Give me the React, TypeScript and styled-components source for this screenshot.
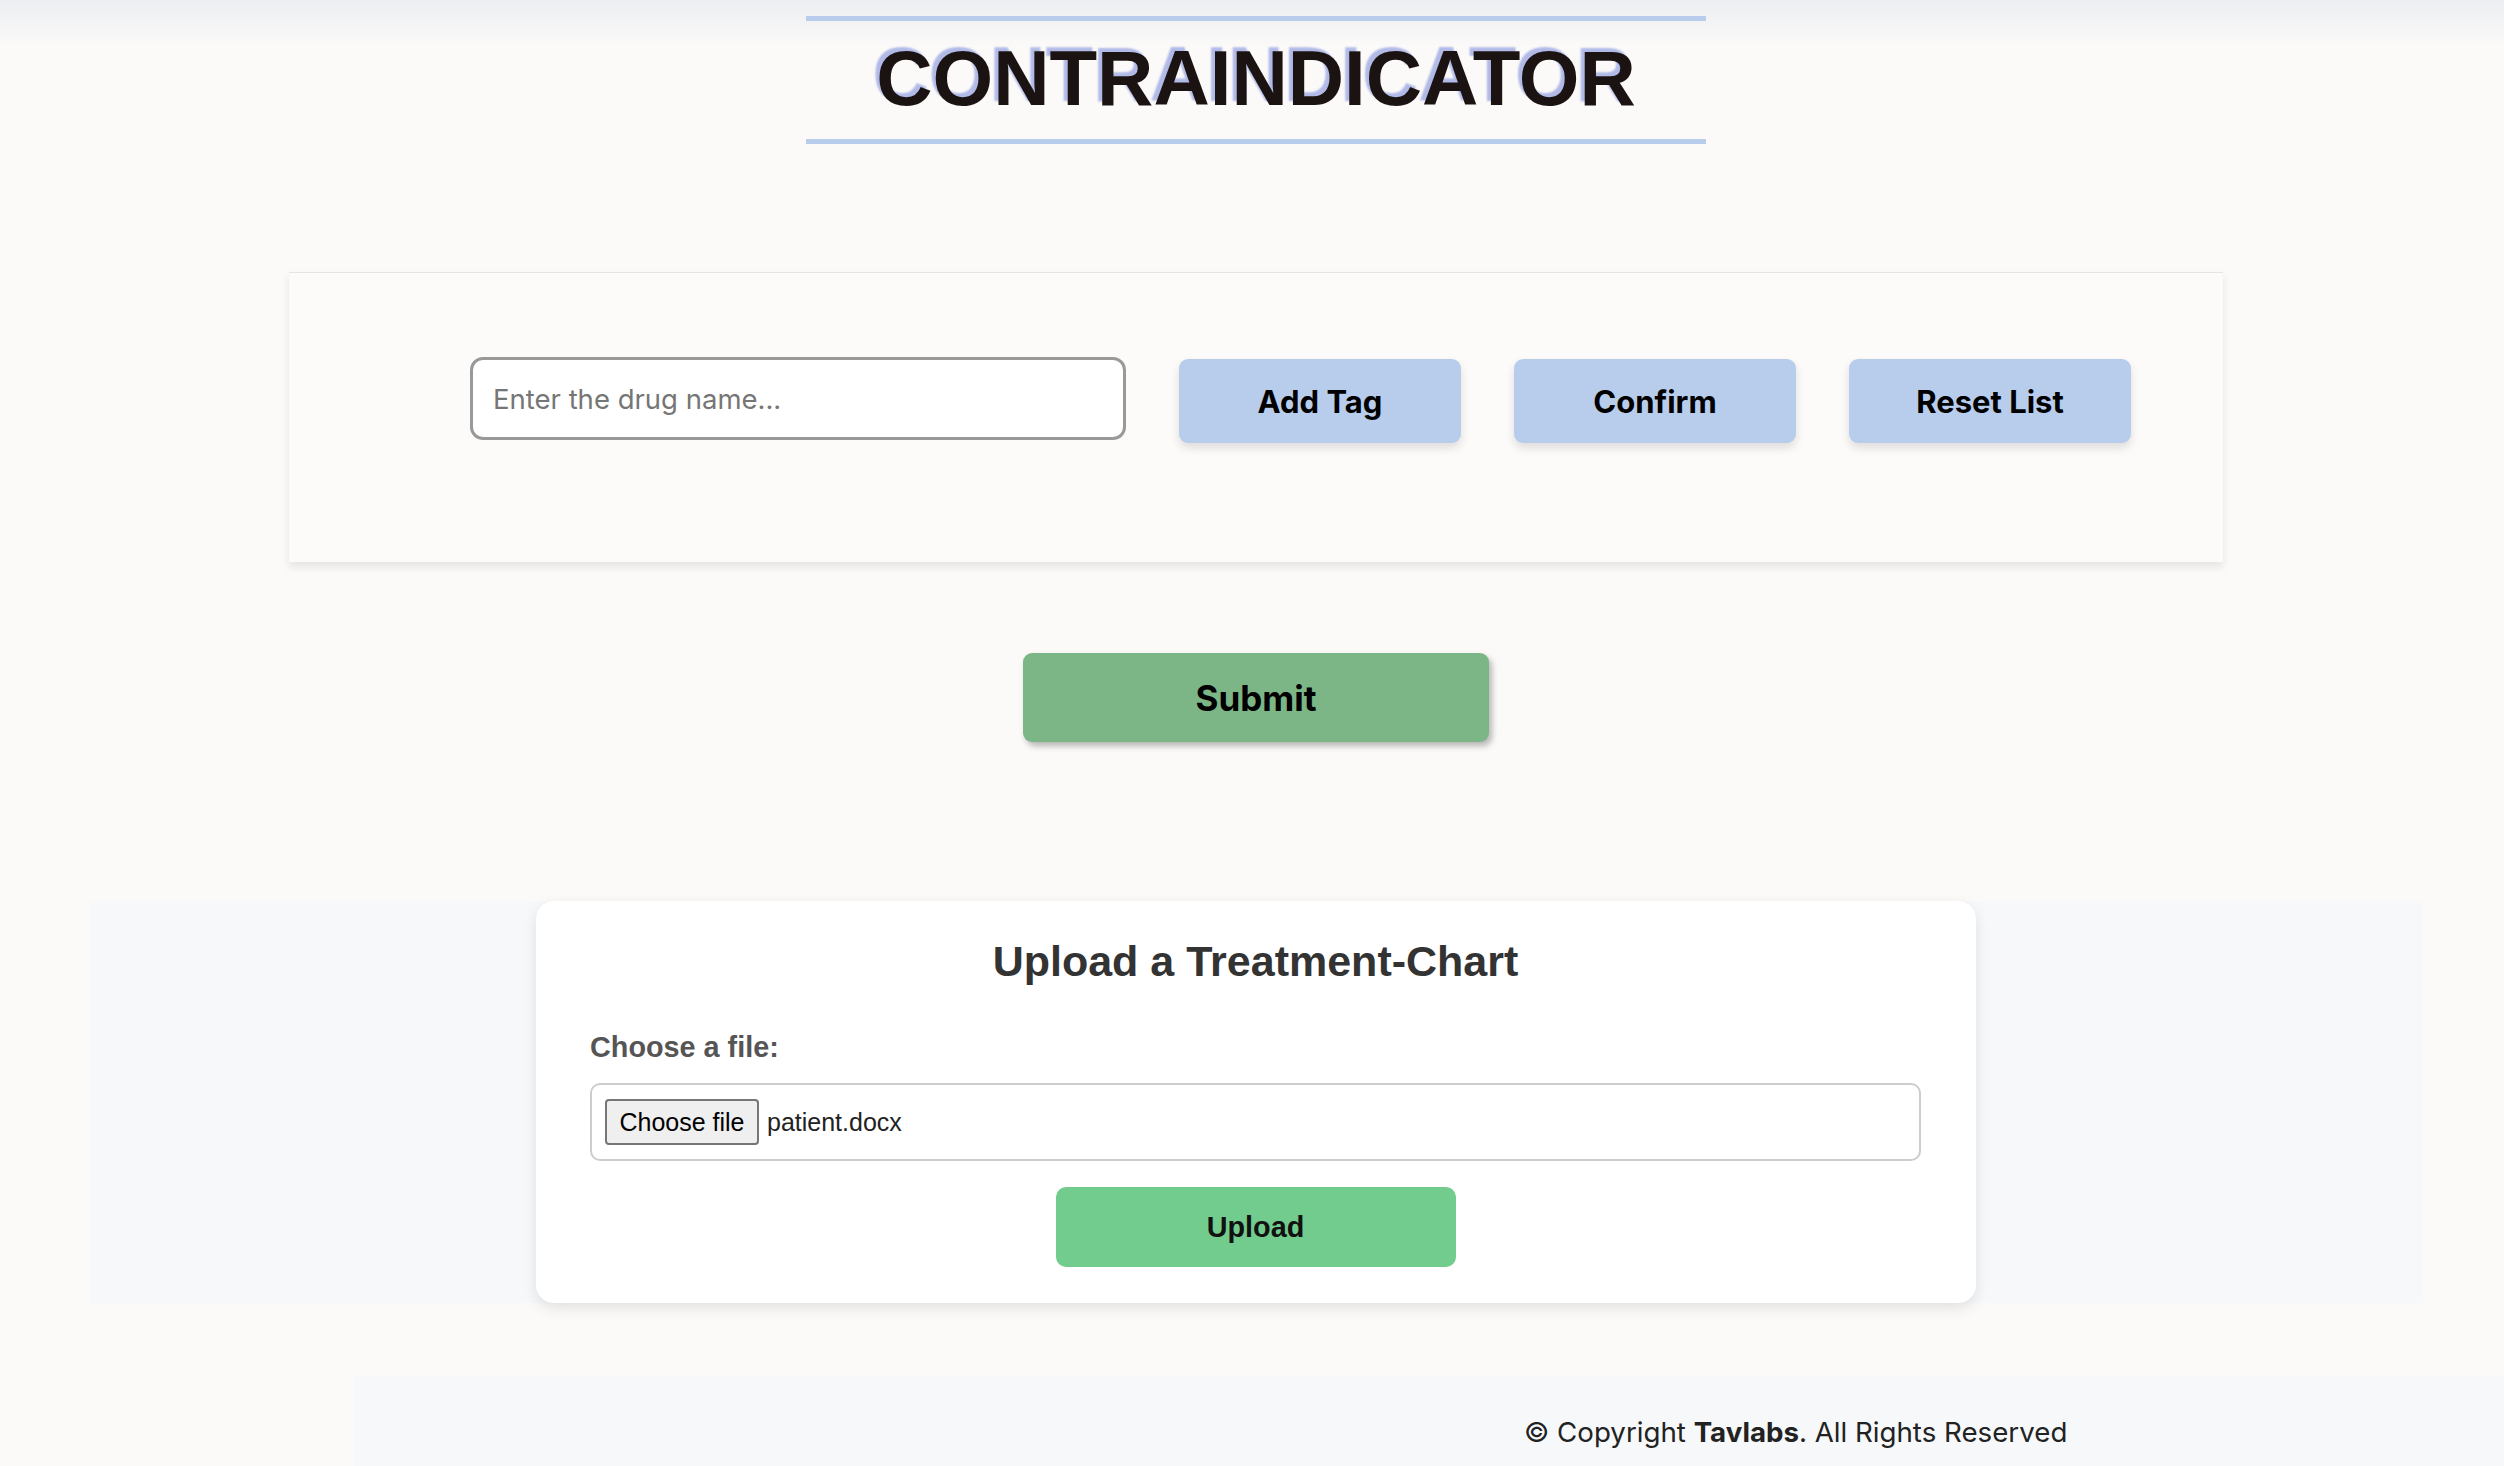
import React from "react";
import styled, { createGlobalStyle } from "styled-components";

const Global = createGlobalStyle`
  html {
    background: #fbfaf9 linear-gradient(to bottom, #eceef1 0px, #fbfaf9 46px) no-repeat;
    min-height: 100%;
  }
  body {
    margin: 0;
    padding: 0 0 0 8px;
    font-family: "Liberation Sans", Arial, sans-serif;
    overflow: hidden;
  }
  * { box-sizing: border-box; }
`;

const Page = styled.div`
  display: flex;
  flex-direction: column;
  align-items: center;
  width: 2496px;
`;

const Header = styled.header`
  width: 900px;
  margin-top: 16px;
  border-top: 5px solid #b8cdeb;
  border-bottom: 5px solid #b8cdeb;
  padding-bottom: 4px;
  display: flex;
  justify-content: center;
`;

const Title = styled.h1`
  margin: 0;
  font-family: "Liberation Sans", Arial, sans-serif;
  font-weight: 700;
  font-size: 78px;
  line-height: 114px;
  color: #1b1212;
  text-shadow: -4px -4px 2px #b1bae7;
`;

const TagCard = styled.section`
  width: 1934px;
  height: 290px;
  margin-top: 128px;
  padding: 84px 0 0 181px;
  background: #fcfbfa;
  border-top: 1px solid #e6e4e1;
  box-shadow: 0 5px 9px rgba(0, 0, 0, 0.09);
  display: flex;
  align-items: flex-start;
  gap: 53px;
`;

const DrugInput = styled.input`
  width: 656px;
  height: 83px;
  border: 3px solid #999;
  border-radius: 13px;
  background: #fff;
  padding: 0 20px;
  font-family: Inter, "Liberation Sans", sans-serif;
  font-size: 27.5px;
  color: #333;
  outline: none;
  &::placeholder { color: #767676; }
`;

const TagButton = styled.button`
  width: 282px;
  height: 84px;
  margin-top: 2px;
  border: none;
  border-radius: 9px;
  background: #b8cdeb;
  box-shadow: 0 5px 10px rgba(0, 0, 0, 0.12);
  font-family: Inter, "Liberation Sans", sans-serif;
  font-weight: 700;
  font-size: 31px;
  color: #000;
  cursor: pointer;
`;

const SubmitButton = styled.button`
  width: 466px;
  height: 89px;
  margin-top: 91px;
  border: none;
  border-radius: 9px;
  background: #7db686;
  box-shadow: 3px 4px 6px rgba(0, 0, 0, 0.28);
  font-family: Inter, "Liberation Sans", sans-serif;
  font-weight: 700;
  font-size: 35px;
  color: #000;
  cursor: pointer;
`;

const UploadSection = styled.section`
  width: 2333px;
  margin-top: 159px;
  background: #f7f8fa;
  display: flex;
  justify-content: center;
`;

const UploadCard = styled.div`
  width: 1440px;
  padding: 34px 55px 36px 54px;
  background: #fff;
  border-radius: 18px;
  box-shadow: 0 5px 14px rgba(0, 0, 0, 0.1);
  display: flex;
  flex-direction: column;
  align-items: stretch;
`;

const UploadTitle = styled.h2`
  margin: 0;
  text-align: center;
  font-size: 43px;
  line-height: 52px;
  font-weight: 700;
  color: #333;
`;

const FieldLabel = styled.label`
  margin-top: 43px;
  font-size: 28.8px;
  line-height: 34px;
  font-weight: 700;
  color: #555;
`;

const FileBox = styled.div`
  margin-top: 19px;
  height: 78px;
  border: 2px solid #cdcdcd;
  border-radius: 10px;
  padding: 0 13px;
  display: flex;
  align-items: center;
  gap: 8px;
`;

const FileButton = styled.button`
  width: 154px;
  height: 46px;
  padding: 0;
  background: #efefef;
  border: 2px solid #767676;
  border-radius: 4px;
  font-family: "Liberation Sans", Arial, sans-serif;
  font-size: 25px;
  color: #000;
`;

const FileName = styled.span`
  font-size: 25px;
  color: #222;
`;

const UploadButton = styled.button`
  align-self: center;
  width: 400px;
  height: 80px;
  margin-top: 26px;
  border: none;
  border-radius: 10px;
  background: #72cc8e;
  font-family: "Liberation Sans", Arial, sans-serif;
  font-weight: 700;
  font-size: 28.8px;
  color: #111;
  cursor: pointer;
`;

const Footer = styled.footer`
  align-self: stretch;
  margin: 74px 0 0 346px;
  height: 120px;
  background: #f7f8fa;
  padding: 36px 0 0 1170px;
  font-family: Inter, "Liberation Sans", sans-serif;
  font-size: 27.7px;
  line-height: 38px;
  color: #222;
  white-space: nowrap;
  strong { font-weight: 700; }
`;

export default function App() {
  return (
    <>
      <Global />
      <Page>
        <Header>
          <Title>CONTRAINDICATOR</Title>
        </Header>
        <TagCard>
          <DrugInput placeholder="Enter the drug name..." />
          <TagButton>Add Tag</TagButton>
          <TagButton>Confirm</TagButton>
          <TagButton>Reset List</TagButton>
        </TagCard>
        <SubmitButton>Submit</SubmitButton>
        <UploadSection>
          <UploadCard>
            <UploadTitle>Upload a Treatment-Chart</UploadTitle>
            <FieldLabel>Choose a file:</FieldLabel>
            <FileBox>
              <FileButton>Choose file</FileButton>
              <FileName>patient.docx</FileName>
            </FileBox>
            <UploadButton>Upload</UploadButton>
          </UploadCard>
        </UploadSection>
        <Footer>
          © Copyright <strong>Tavlabs</strong>. All Rights Reserved
        </Footer>
      </Page>
    </>
  );
}
